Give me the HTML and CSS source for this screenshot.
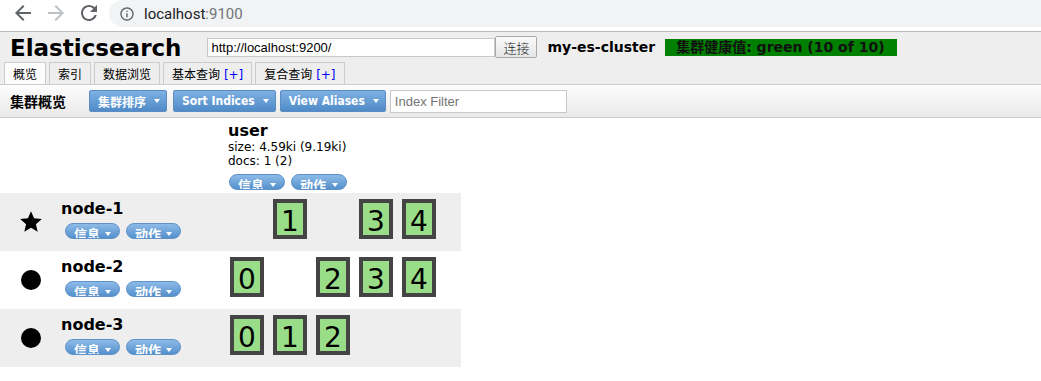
FILE: index.html
```html
<!DOCTYPE html>
<html lang="zh-CN">
<head>
    <meta charset="UTF-8">
    <title>Elasticsearch Head</title>
    <link rel="stylesheet" href="styles.css">
</head>
<body>
    <!-- Browser toolbar -->
    <div class="chrome">
        <div class="nav">
            <svg class="nav-icon" viewBox="0 0 24 24"><path fill="#5f6368" d="M20 11H7.83l5.59-5.59L12 4l-8 8 8 8 1.41-1.41L7.83 13H20v-2z"/></svg>
            <svg class="nav-icon" viewBox="0 0 24 24"><path fill="#bdc1c6" d="M12 4l-1.41 1.41L16.17 11H4v2h12.17l-5.58 5.59L12 20l8-8z"/></svg>
            <svg class="nav-icon" viewBox="0 0 24 24"><path fill="#5f6368" d="M17.65 6.35C16.2 4.9 14.21 4 12 4c-4.42 0-7.990 3.58-7.990 8s3.57 8 7.990 8c3.73 0 6.84-2.55 7.73-6h-2.08c-.82 2.33-3.04 4-5.650 4-3.310 0-6-2.690-6-6s2.690-6 6-6c1.660 0 3.140.69 4.220 1.780L13 11h7V4l-2.350 2.350z"/></svg>
        </div>
        <div class="omnibox">
            <svg class="info-icon" viewBox="0 0 24 24"><path fill="#5f6368" d="M11 7h2v2h-2zm0 4h2v6h-2zm1-9C6.48 2 2 6.48 2 12s4.48 10 10 10 10-4.48 10-10S17.52 2 12 2zm0 18c-4.41 0-8-3.59-8-8s3.59-8 8-8 8 3.59 8 8-3.59 8-8 8z"/></svg>
            <span class="host">localhost</span><span class="port">:9100</span>
        </div>
    </div>

    <!-- Header -->
    <div class="header">
        <div class="topbar">
            <h1>Elasticsearch</h1>
            <input class="base-uri" type="text" value="http://localhost:9200/">
            <button class="connect">连接</button>
            <span class="cluster-name">my-es-cluster</span>
            <span class="health">集群健康值: green (10 of 10)</span>
        </div>
        <div class="tabs">
            <div class="tab active">概览</div>
            <div class="tab">索引</div>
            <div class="tab">数据浏览</div>
            <div class="tab">基本查询 <span class="plus">[+]</span></div>
            <div class="tab">复合查询 <span class="plus">[+]</span></div>
        </div>
    </div>

    <!-- Overview toolbar -->
    <div class="toolbar">
        <span class="toolbar-title">集群概览</span>
        <button class="blue-btn">集群排序<span class="caret"></span></button>
        <button class="blue-btn">Sort Indices<span class="caret"></span></button>
        <button class="blue-btn">View Aliases<span class="caret"></span></button>
        <input class="index-filter" type="text" placeholder="Index Filter">
    </div>

    <!-- Cluster overview -->
    <div class="overview">
        <div class="index-row">
            <div class="index-head">
                <div class="index-name">user</div>
                <div class="index-stat">size: 4.59ki (9.19ki)</div>
                <div class="index-stat">docs: 1 (2)</div>
                <div class="pills">
                    <span class="pill">信息<span class="caret"></span></span>
                    <span class="pill">动作<span class="caret"></span></span>
                </div>
            </div>
        </div>

        <div class="node-row">
            <div class="node-icon">
                <svg class="star" viewBox="0 0 24 24"><path d="M12 17.27L18.18 21l-1.64-7.03L22 9.24l-7.19-.61L12 2 9.19 8.63 2 9.24l5.46 4.73L5.82 21z"/></svg>
            </div>
            <div class="node-info">
                <div class="node-name">node-1</div>
                <div class="pills">
                    <span class="pill">信息<span class="caret"></span></span>
                    <span class="pill">动作<span class="caret"></span></span>
                </div>
            </div>
            <div class="shards">
                <span class="slot"></span>
                <span class="shard">1</span>
                <span class="slot"></span>
                <span class="shard">3</span>
                <span class="shard">4</span>
            </div>
        </div>

        <div class="node-row">
            <div class="node-icon"><span class="dot"></span></div>
            <div class="node-info">
                <div class="node-name">node-2</div>
                <div class="pills">
                    <span class="pill">信息<span class="caret"></span></span>
                    <span class="pill">动作<span class="caret"></span></span>
                </div>
            </div>
            <div class="shards">
                <span class="shard">0</span>
                <span class="slot"></span>
                <span class="shard">2</span>
                <span class="shard">3</span>
                <span class="shard">4</span>
            </div>
        </div>

        <div class="node-row">
            <div class="node-icon"><span class="dot"></span></div>
            <div class="node-info">
                <div class="node-name">node-3</div>
                <div class="pills">
                    <span class="pill">信息<span class="caret"></span></span>
                    <span class="pill">动作<span class="caret"></span></span>
                </div>
            </div>
            <div class="shards">
                <span class="shard">0</span>
                <span class="shard">1</span>
                <span class="shard">2</span>
            </div>
        </div>
    </div>
</body>
</html>
```

FILE: styles.css
```css
/* General */
body {
    margin: 0;
    font-family: "DejaVu Sans", "Noto Sans CJK SC", sans-serif;
    font-size: 12px;
    color: #000;
    background-color: #fff;
}

/* Browser toolbar */
.chrome {
    display: flex;
    height: 31px;
    border-bottom: 1px solid #b9b9b9;
    background-color: #fff;
}

.nav {
    display: flex;
    gap: 9px;
    padding: 1px 0 0 11px;
}

.nav-icon {
    width: 24px;
    height: 24px;
}

.omnibox {
    flex: 1;
    display: flex;
    align-items: center;
    height: 27px;
    margin-left: 8px;
    padding-left: 10px;
    border-radius: 14px 0 0 14px;
    background-color: #f1f3f4;
    font-family: Roboto, "Noto Sans", sans-serif;
    font-size: 15px;
    color: #202124;
}

.info-icon {
    width: 16px;
    height: 16px;
    margin-right: 9px;
}

.port {
    color: #70757a;
}

/* Header */
.header {
    background-color: #eee;
}

.topbar {
    display: flex;
    align-items: center;
    height: 30px;
    padding-left: 10px;
}

h1 {
    margin: 2px 26px 0 0;
    font-size: 23px;
    font-weight: bold;
}

.base-uri {
    width: 288px;
    height: 19px;
    box-sizing: border-box;
    margin: 0;
    padding: 0 3px;
    border: 1px solid #c8c8c8;
    font-family: "Liberation Sans", Arial, sans-serif;
    font-size: 13px;
    color: #000;
}

.connect {
    width: 42px;
    height: 22px;
    margin: 0;
    padding: 0;
    border: 1px solid #a9a9a9;
    border-radius: 2px;
    background: linear-gradient(#fafafa, #e6e6e6);
    font-family: "Noto Sans CJK SC", sans-serif;
    font-size: 13px;
    font-weight: 300;
    color: #222;
}

.cluster-name {
    margin-left: 10px;
    font-size: 14px;
    font-weight: bold;
}

.health {
    margin-left: 10px;
    height: 17px;
    padding: 0 12px 0 11px;
    background-color: #008000;
    font-size: 14px;
    font-weight: bold;
    line-height: 17px;
    color: #111;
}

/* Tabs */
.tabs {
    display: flex;
    gap: 3px;
    height: 22px;
    padding-left: 4px;
}

.tab {
    height: 18px;
    padding: 3px 8px 0;
    border: 1px solid #ccc;
    border-bottom: none;
    background-color: #eee;
    line-height: 18px;
    white-space: nowrap;
}

.tab.active {
    background-color: #fcfcfc;
}

.plus {
    color: #00f;
}

/* Overview toolbar */
.toolbar {
    display: flex;
    align-items: center;
    gap: 4px;
    height: 32px;
    padding-left: 10px;
    border-top: 1px solid #ccc;
    border-bottom: 1px solid #ccc;
    background: linear-gradient(#fdfdfd, #e9e9e9);
}

.toolbar-title {
    margin-right: 19px;
    font-size: 14px;
    font-weight: bold;
}

.blue-btn {
    display: flex;
    align-items: center;
    height: 22px;
    margin: 0;
    padding: 0 6px 0 8px;
    border: 1px solid #5a8cc3;
    border-radius: 2px;
    background: linear-gradient(#7eb0e2, #4f8bc8);
    font-family: "DejaVu Sans Condensed", "DejaVu Sans", "Noto Sans CJK SC", sans-serif;
    font-size: 12px;
    font-weight: bold;
    color: #fff;
}

.blue-btn:first-of-type {
    margin-right: 2px;
}

.caret {
    display: inline-block;
    width: 0;
    height: 0;
    margin-left: 8px;
    border-left: 3px solid transparent;
    border-right: 3px solid transparent;
    border-top: 4px solid #fff;
}

.index-filter {
    width: 177px;
    height: 23px;
    box-sizing: border-box;
    margin: 0;
    padding: 0 4px;
    border: 1px solid #c8c8c8;
    font-family: "Liberation Sans", Arial, sans-serif;
    font-size: 13px;
}

.index-filter::placeholder {
    color: #757575;
}

/* Cluster overview */
.overview {
    width: 461px;
}

.index-row {
    height: 75px;
}

.index-head {
    margin-left: 228px;
    padding-top: 3px;
}

.index-name {
    font-size: 16px;
    font-weight: bold;
    line-height: 19px;
}

.index-stat {
    line-height: 14px;
}

.index-head .pills {
    margin: 6px 0 0 1px;
}

.pills {
    display: flex;
    gap: 6px;
}

.pill {
    display: flex;
    align-items: flex-start;
    justify-content: space-between;
    width: 56px;
    height: 16px;
    box-sizing: border-box;
    padding: 2px 8px 0;
    border: 1px solid #5e92c9;
    border-radius: 8px;
    background: linear-gradient(#8dbbe8, #5590cc);
    overflow: hidden;
    font-family: "Noto Sans CJK SC", sans-serif;
    font-size: 13px;
    font-weight: bold;
    line-height: 16px;
    color: #fff;
}

.pill .caret {
    margin: 6px 0 0;
}

.node-row {
    display: flex;
    height: 58px;
}

.node-row:nth-child(even) {
    background-color: #eee;
}

.node-icon {
    display: flex;
    align-items: center;
    justify-content: center;
    width: 61px;
}

.star {
    width: 26px;
    height: 26px;
}

.dot {
    width: 20px;
    height: 20px;
    border-radius: 50%;
    background-color: #000;
}

.node-info {
    width: 167px;
    padding-top: 6px;
}

.node-name {
    font-size: 16px;
    font-weight: bold;
    line-height: 19px;
}

.node-info .pills {
    margin: 5px 0 0 4px;
    gap: 6px;
}

.node-info .pill {
    width: 55px;
}

.shards {
    display: flex;
    gap: 9px;
    padding: 6px 0 0 2px;
}

.slot,
.shard {
    width: 34px;
    height: 40px;
    box-sizing: border-box;
}

.shard {
    border: 4px solid #444;
    background-color: #99dd88;
    font-size: 28px;
    line-height: 38px;
    text-align: center;
}
```
